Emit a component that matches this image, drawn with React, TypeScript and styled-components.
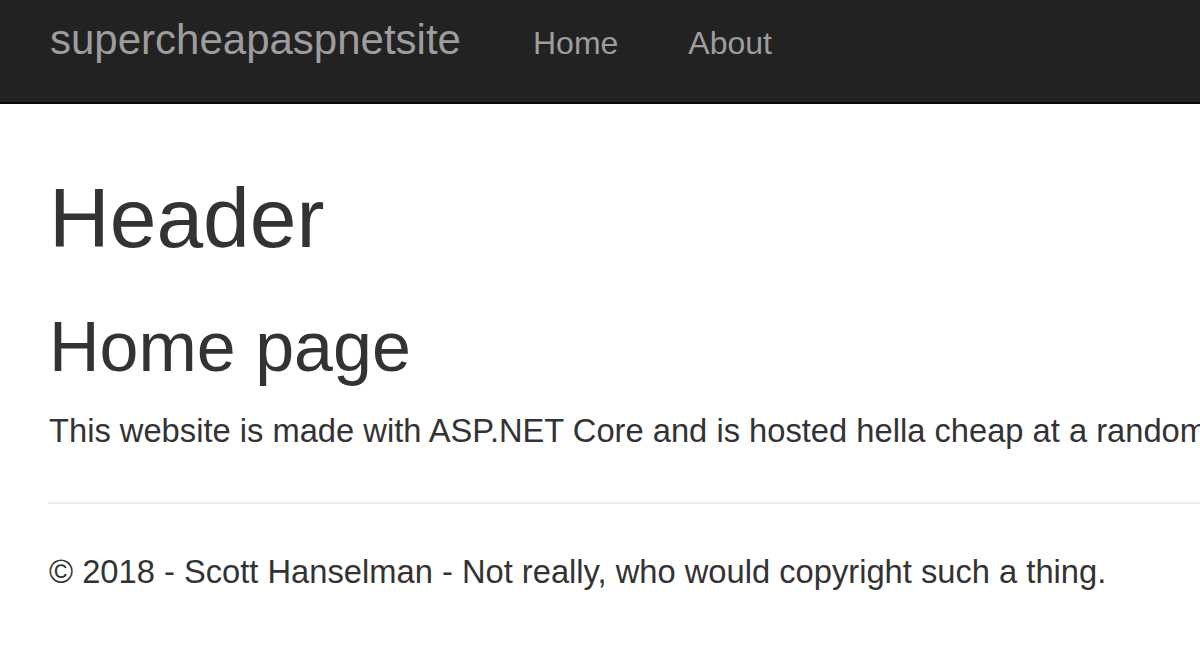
import React from 'react';
import styled, { createGlobalStyle } from 'styled-components';

const GlobalStyle = createGlobalStyle`
  html, body {
    margin: 0;
    padding: 0;
    background: #fff;
    overflow: hidden;
  }
  body {
    font-family: "Liberation Sans", Arial, Helvetica, sans-serif;
    color: #333;
  }
`;

const Navbar = styled.nav`
  display: flex;
  align-items: baseline;
  box-sizing: border-box;
  height: 104px;
  padding: 19px 0 0 50px;
  background: #222;
  border-bottom: 2px solid #080808;
`;

const Brand = styled.a`
  font-size: 42px;
  line-height: 1;
  color: #9d9d9d;
  text-decoration: none;
  margin-right: 72px;
`;

const NavLink = styled.a`
  font-size: 32px;
  line-height: 1;
  color: #9d9d9d;
  text-decoration: none;
  margin-right: 70px;
`;

const Container = styled.main`
  padding: 0 0 0 49px;
  white-space: nowrap;
`;

const Title = styled.h1<{ $size: number; $top: number }>`
  margin: ${p => p.$top}px 0 0;
  font-size: ${p => p.$size}px;
  font-weight: 400;
  line-height: 1.1;
  color: #333;
`;

const Text = styled.p<{ $top: number }>`
  margin: ${p => p.$top}px 0 0;
  font-size: 32.7px;
  line-height: 1.42857;
  color: #333;
`;

const Rule = styled.hr`
  margin: 47px 0 0 -1px;
  border: 0;
  border-top: 2px solid #eee;
`;

export default function App() {
  return (
    <>
      <GlobalStyle />
      <Navbar>
        <Brand href="#">supercheapaspnetsite</Brand>
        <NavLink href="#">Home</NavLink>
        <NavLink href="#">About</NavLink>
      </Navbar>
      <Container>
        <Title $size={84} $top={68}>Header</Title>
        <Title as="h2" $size={70} $top={45}>Home page</Title>
        <Text $top={22}>
          This website is made with ASP.NET Core and is hosted hella cheap at a random place on the internet.
        </Text>
        <Rule />
        <Text $top={45}>© 2018 - Scott Hanselman - Not really, who would copyright such a thing.</Text>
      </Container>
    </>
  );
}
